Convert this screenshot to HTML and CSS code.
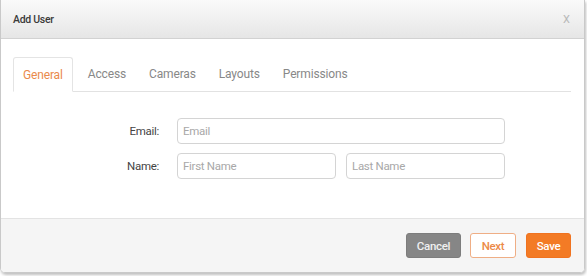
FILE: index.html
```html
<!DOCTYPE html>
<html>
<head>
<meta charset="utf-8">
<link rel="stylesheet" href="styles.css">
</head>
<body>
<div class="modal">
  <div class="modal-header">
    <span class="title">Add User</span>
    <span class="close">X</span>
  </div>
  <div class="modal-body">
    <div class="tabs">
      <div class="tab active">General</div>
      <div class="tab">Access</div>
      <div class="tab">Cameras</div>
      <div class="tab">Layouts</div>
      <div class="tab">Permissions</div>
    </div>
    <div class="form">
      <div class="row">
        <label class="label">Email:</label>
        <div class="field wide"><input type="text" placeholder="Email"></div>
      </div>
      <div class="row">
        <label class="label">Name:</label>
        <div class="field"><input type="text" placeholder="First Name"></div>
        <div class="field"><input type="text" placeholder="Last Name"></div>
      </div>
    </div>
  </div>
  <div class="modal-footer">
    <button class="btn cancel">Cancel</button>
    <button class="btn next">Next</button>
    <button class="btn save">Save</button>
  </div>
</div>
</body>
</html>
```

FILE: styles.css
```css
* { box-sizing: border-box; }
html, body { margin: 0; padding: 0; background: #fff; }
body {
  font-family: Roboto, "Liberation Sans", sans-serif;
  width: 587px;
  height: 276px;
  overflow: hidden;
}
.modal {
  width: 585px;
  height: 273px;
  border: 1px solid #c9c9c9;
  border-top: none;
  border-radius: 0 0 5px 5px;
  box-shadow: 1px 2px 3px rgba(0,0,0,0.25);
  display: flex;
  flex-direction: column;
  overflow: hidden;
}
.modal-header {
  height: 39px;
  background: linear-gradient(#fafafa, #e6e6e6);
  border-bottom: 1px solid #d2d2d2;
  display: flex;
  align-items: center;
  justify-content: space-between;
  padding: 0 14px 0 12px;
}
.title {
  font-size: 10.5px;
  font-weight: 500;
  color: #3a3a3a;
  letter-spacing: -0.3px;
}
.close {
  font-size: 11px;
  color: #b8b8b8;
}
.modal-body {
  flex: 1;
  background: #fff;
  padding: 18px 13px 0 12px;
  border-bottom: 1px solid #e3e3e3;
}
.tabs {
  display: flex;
  border-bottom: 1px solid #e2e2e2;
  height: 35px;
}
.tab {
  font-size: 12px;
  color: #888;
  padding: 0 9px;
  margin-right: 5px;
  height: 35px;
  line-height: 34px;
  letter-spacing: -0.15px;
}
.tab.active {
  color: #ea8a4c;
  border: 1px solid #e4e4e4;
  border-bottom: 1px solid #fff;
  border-radius: 3px 3px 0 0;
  background: #fff;
  margin-right: 6px;
}
.form {
  padding-top: 26px;
  display: flex;
  flex-direction: column;
  gap: 9px;
}
.row {
  display: flex;
  align-items: center;
  gap: 10px;
}
.label {
  width: 146px;
  text-align: right;
  font-size: 11.5px;
  color: #444;
  margin-right: 8px;
  letter-spacing: -0.3px;
}
.field { width: 159px; }
.field.wide { width: 328px; }
input {
  width: 100%;
  height: 26px;
  border: 1px solid #d4d4d4;
  border-radius: 4px;
  padding: 0 5px;
  font-family: inherit;
  font-size: 11.5px;
  color: #444;
  letter-spacing: -0.3px;
  outline: none;
}
input::placeholder { color: #a8a8a8; }
.modal-footer {
  height: 53px;
  background: #f5f5f5;
  display: flex;
  justify-content: flex-end;
  align-items: flex-start;
  padding: 14px 13px 0 0;
  gap: 9px;
}
.btn {
  height: 25px;
  border-radius: 3px;
  font-family: inherit;
  font-size: 11.5px;
  font-weight: 500;
  letter-spacing: -0.3px;
  padding: 0;
  cursor: pointer;
}
.cancel {
  width: 55px;
  background: #868686;
  border: 1px solid #7d7d7d;
  color: #f0f0f0;
}
.next {
  width: 46px;
  background: #fff;
  border: 1px solid #efae85;
  color: #ec8a48;
}
.save {
  width: 45px;
  background: #f37b25;
  border: 1px solid #f07320;
  color: #fff;
  margin-left: 1px;
}
```
